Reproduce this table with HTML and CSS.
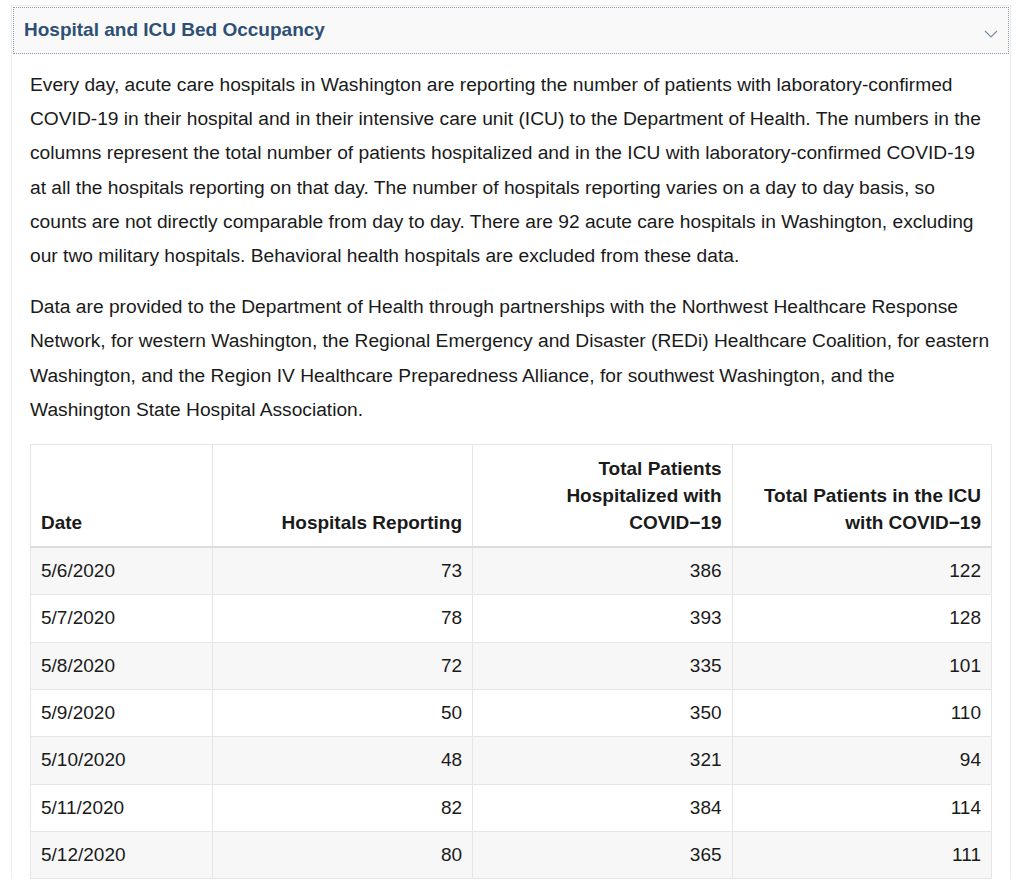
FILE: index.html
```html
<!DOCTYPE html>
<html>
<head>
<meta charset="utf-8">
<link rel="stylesheet" href="styles.css">
</head>
<body>
<section class="panel">
  <div class="panel-header">
    <h2 class="panel-title">Hospital and ICU Bed Occupancy</h2>
    <svg class="chevron" width="14" height="8" viewBox="0 0 14 8"><path d="M1 1 L7 7 L13 1" fill="none" stroke="#7d8ea3" stroke-width="1.2"/></svg>
  </div>
  <div class="panel-body">
    <p>Every day, acute care hospitals in Washington are reporting the number of patients with laboratory-confirmed COVID-19 in their hospital and in their intensive care unit (ICU) to the Department of Health. The numbers in the columns represent the total number of patients hospitalized and in the ICU with laboratory-confirmed COVID-19 at all the hospitals reporting on that day. The number of hospitals reporting varies on a day to day basis, so counts are not directly comparable from day to day. There are 92 acute care hospitals in Washington, excluding our two military hospitals. Behavioral health hospitals are excluded from these data.</p>
    <p>Data are provided to the Department of Health through partnerships with the Northwest Healthcare Response Network, for western Washington, the Regional Emergency and Disaster (REDi) Healthcare Coalition, for eastern Washington, and the Region IV Healthcare Preparedness Alliance, for southwest Washington, and the Washington State Hospital Association.</p>
    <table class="data">
      <colgroup>
        <col class="c1"><col class="c2"><col class="c3"><col class="c4">
      </colgroup>
      <thead>
        <tr>
          <th class="left">Date</th>
          <th>Hospitals Reporting</th>
          <th>Total Patients Hospitalized with COVID&#8722;19</th>
          <th>Total Patients in the ICU with COVID&#8722;19</th>
        </tr>
      </thead>
      <tbody>
        <tr><td class="left">5/6/2020</td><td>73</td><td>386</td><td>122</td></tr>
        <tr><td class="left">5/7/2020</td><td>78</td><td>393</td><td>128</td></tr>
        <tr><td class="left">5/8/2020</td><td>72</td><td>335</td><td>101</td></tr>
        <tr><td class="left">5/9/2020</td><td>50</td><td>350</td><td>110</td></tr>
        <tr><td class="left">5/10/2020</td><td>48</td><td>321</td><td>94</td></tr>
        <tr><td class="left">5/11/2020</td><td>82</td><td>384</td><td>114</td></tr>
        <tr><td class="left">5/12/2020</td><td>80</td><td>365</td><td>111</td></tr>
      </tbody>
    </table>
  </div>
</section>
</body>
</html>
```

FILE: styles.css
```css
html, body {
  margin: 0;
  padding: 0;
  background: #fff;
}
body {
  font-family: "Liberation Sans", Arial, sans-serif;
  color: #1a1a1a;
}
.panel {
  margin: 5px 12px 0 11px;
  border: 1px solid #ececec;
  border-bottom: none;
  padding: 1px 1px 0 1px;
}
.panel-header {
  display: flex;
  align-items: center;
  justify-content: space-between;
  height: 43px;
  border: 1px dotted #8b9bb0;
  background: #f9f9f9;
  padding: 0 10px 2px 10px;
}
.panel-title {
  margin: 0;
  font-size: 19px;
  font-weight: bold;
  color: #2d5074;
}
.chevron {
  margin-top: 8px;
}
.panel-body {
  padding: 14px 17px 0 17px;
}
.panel-body p {
  margin: 0 0 17px 0;
  font-size: 19.2px;
  line-height: 34.2px;
}
.data {
  width: 100%;
  border-collapse: collapse;
  font-size: 19px;
  margin-top: 0;
  border: 1px solid #e6e6e6;
}
.c1 { width: 182px; }
.c2 { width: 261px; }
.c3 { width: 260px; }
.c4 { width: 260px; }
.data th, .data td {
  border: 1px solid #e6e6e6;
  padding: 10px 10px;
  text-align: right;
  vertical-align: bottom;
}
.data th {
  line-height: 27px;
  font-weight: bold;
  border-bottom: 2px solid #dcdcdc;
}
.data td {
  line-height: 26.3px;
}
.data .left {
  text-align: left;
}
.data tbody tr:nth-child(odd) td {
  background: #f7f7f7;
}
```
